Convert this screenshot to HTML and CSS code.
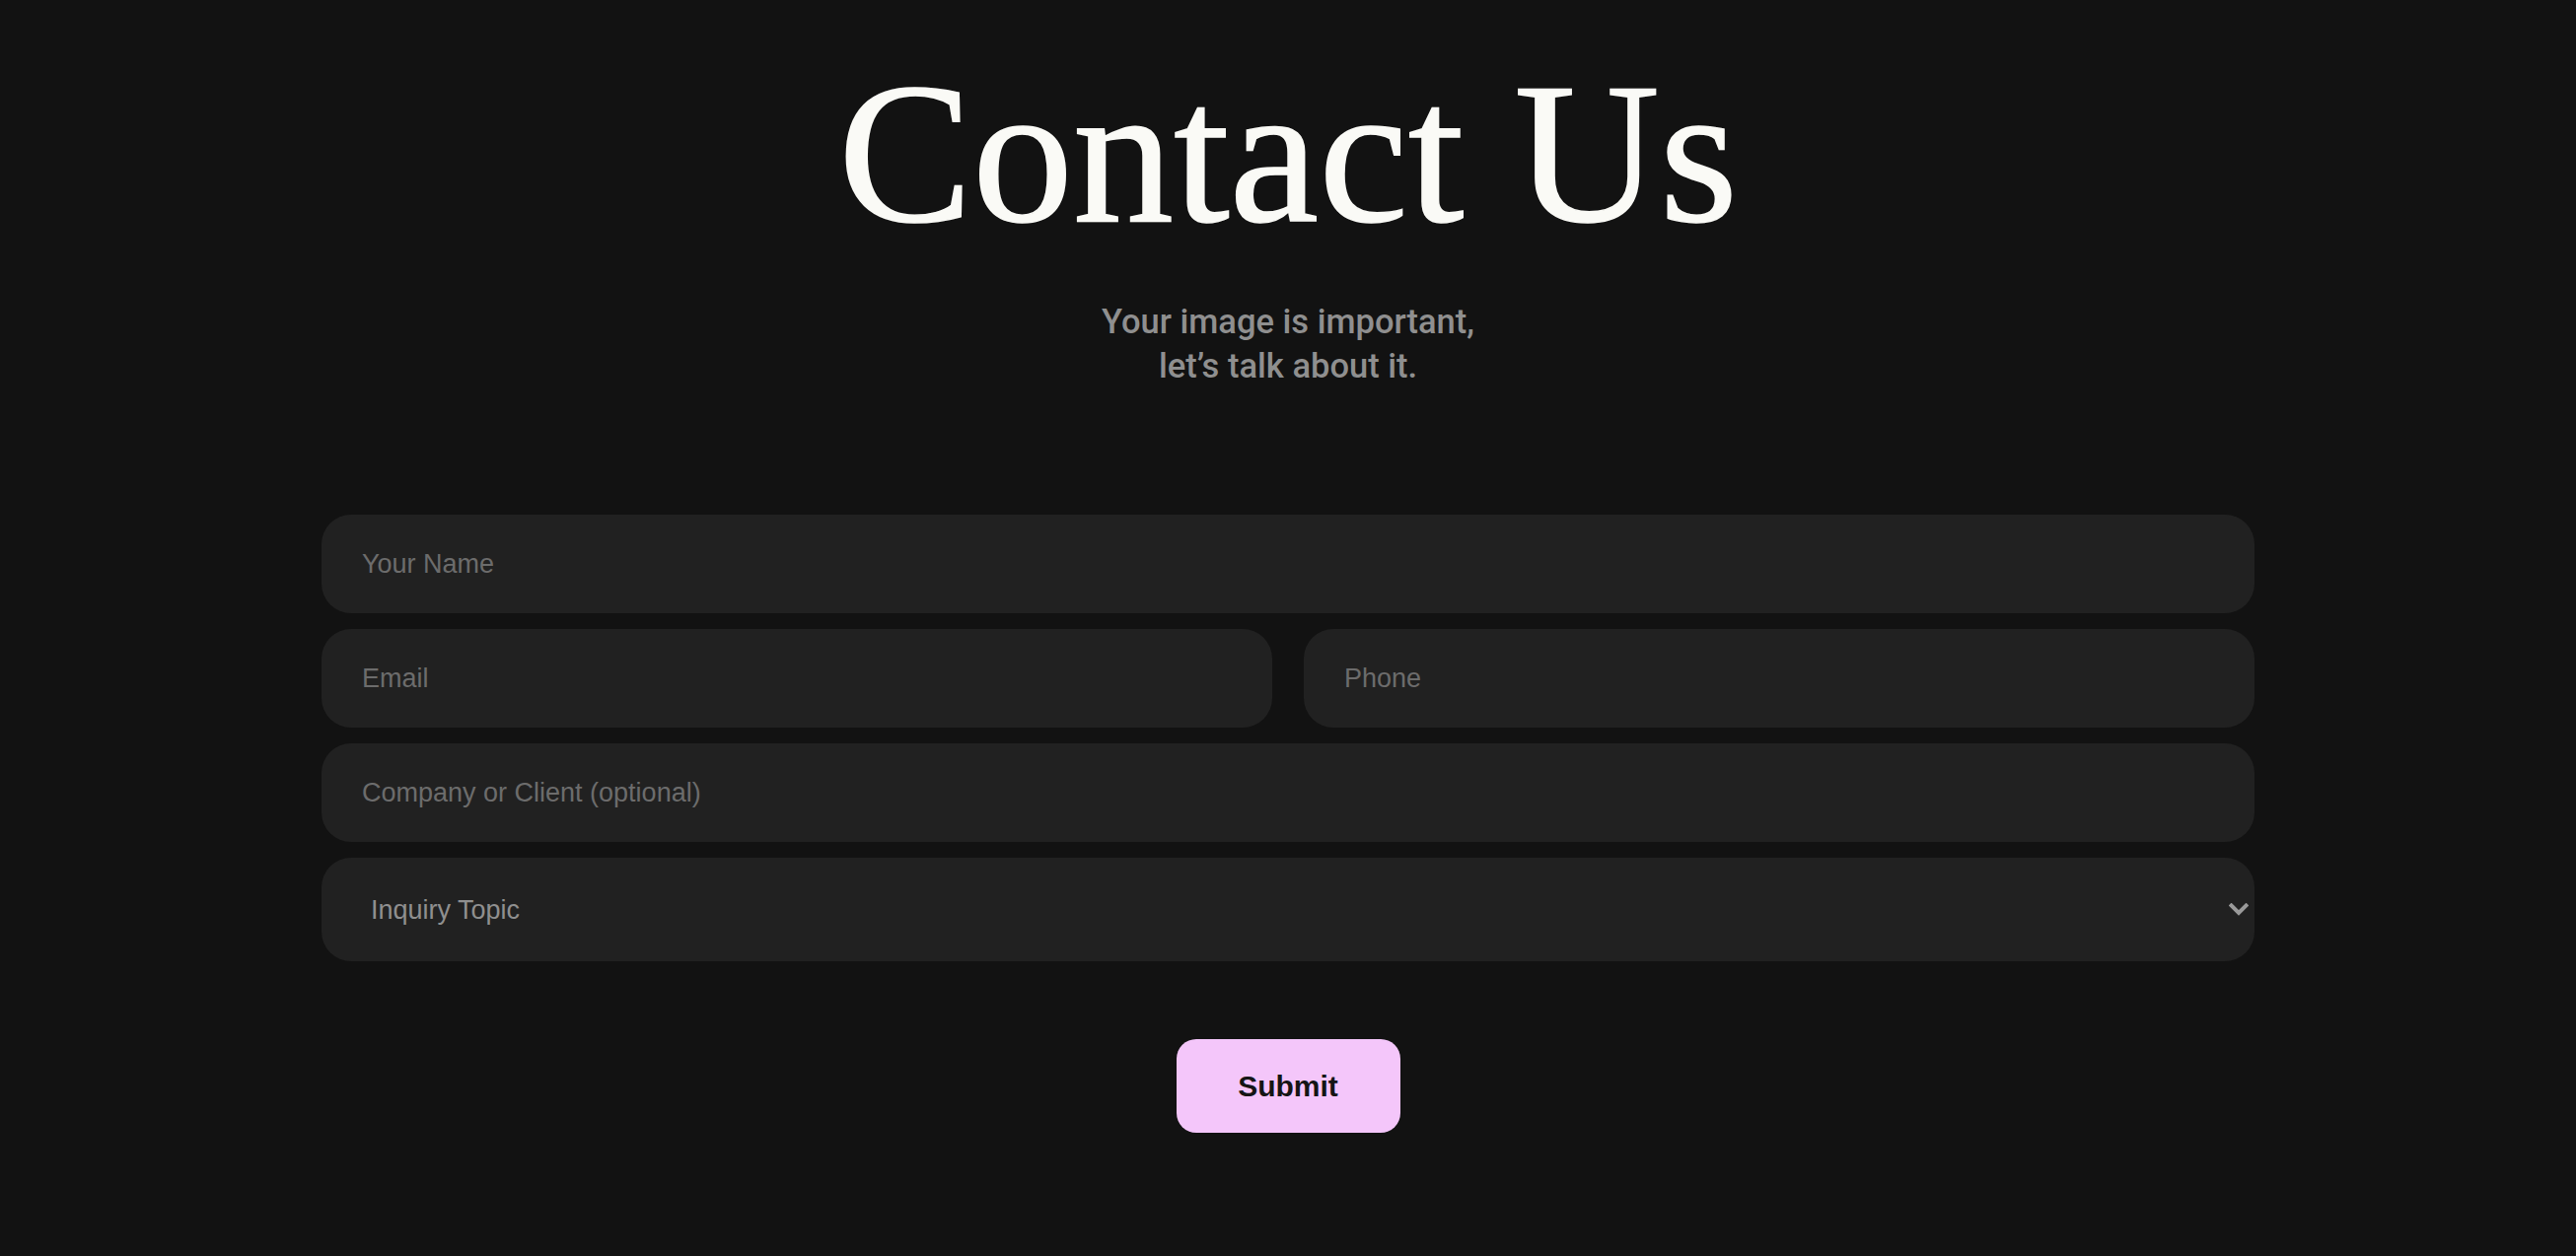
FILE: index.html
```html
<!DOCTYPE html>
<html lang="en">
<head>
<meta charset="utf-8">
<title>Contact Us</title>
<link rel="stylesheet" href="styles.css">
</head>
<body>
<main class="page">
  <header class="hero">
    <h1 class="title">Contact Us</h1>
    <p class="subtitle">Your image is important,<br>let’s talk about it.</p>
  </header>
  <form class="form">
    <input class="field" type="text" placeholder="Your Name">
    <div class="row">
      <input class="field" type="email" placeholder="Email">
      <input class="field" type="tel" placeholder="Phone">
    </div>
    <input class="field" type="text" placeholder="Company or Client (optional)">
    <div class="select-wrap">
      <select class="field select">
        <option>Inquiry Topic</option>
      </select>
      <svg class="chevron" width="20" height="13" viewBox="0 0 20 13" aria-hidden="true">
        <path d="M2.5 2.5 L10 10 L17.5 2.5" fill="none" stroke="#9a9a9a" stroke-width="4" stroke-linecap="square"/>
      </svg>
    </div>
    <div class="actions">
      <button class="submit" type="button">Submit</button>
    </div>
  </form>
</main>
</body>
</html>
```
FILE: styles.css
```css
html, body {
  margin: 0;
  padding: 0;
  background: #121212;
}

.page {
  width: 1960px;
  margin: 0 auto;
  padding-top: 54px;
  display: flex;
  flex-direction: column;
}

.hero {
  display: flex;
  flex-direction: column;
  align-items: center;
}

.title {
  margin: 0;
  font-family: "Liberation Serif", "Times New Roman", serif;
  font-weight: 400;
  font-size: 204px;
  line-height: 202px;
  color: #fafaf6;
  -webkit-text-stroke: 1.5px #fafaf6;
}

.subtitle {
  margin: 48px 0 0;
  font-family: Roboto, "Liberation Sans", sans-serif;
  font-weight: 500;
  font-size: 34.5px;
  line-height: 45px;
  color: #8f8f8f;
  text-align: center;
}

.form {
  margin-top: 128px;
  display: flex;
  flex-direction: column;
  gap: 16px;
}

.row {
  display: grid;
  grid-template-columns: 1fr 1fr;
  gap: 32px;
}

.field {
  box-sizing: border-box;
  width: 100%;
  height: 100px;
  margin: 0;
  padding: 0 40px 0 41px;
  border: none;
  outline: none;
  border-radius: 30px;
  background: #212121;
  font-family: "Liberation Sans", Arial, sans-serif;
  font-size: 27px;
  color: #d0d0d0;
}

.field::placeholder {
  color: #6c6c6c;
  opacity: 1;
}

.select-wrap {
  position: relative;
}

.select {
  -webkit-appearance: none;
  appearance: none;
  height: 105px;
  padding-left: 50px;
  color: #8f8f8f;
}

.chevron {
  position: absolute;
  right: 6px;
  top: 46px;
  pointer-events: none;
}

.actions {
  display: flex;
  justify-content: center;
  margin-top: 63px;
}

.submit {
  width: 227px;
  height: 95px;
  border: none;
  border-radius: 20px;
  background: #f4c6fa;
  color: #151515;
  font-family: "Liberation Sans", Arial, sans-serif;
  font-weight: 700;
  font-size: 30px;
  cursor: pointer;
}
```
